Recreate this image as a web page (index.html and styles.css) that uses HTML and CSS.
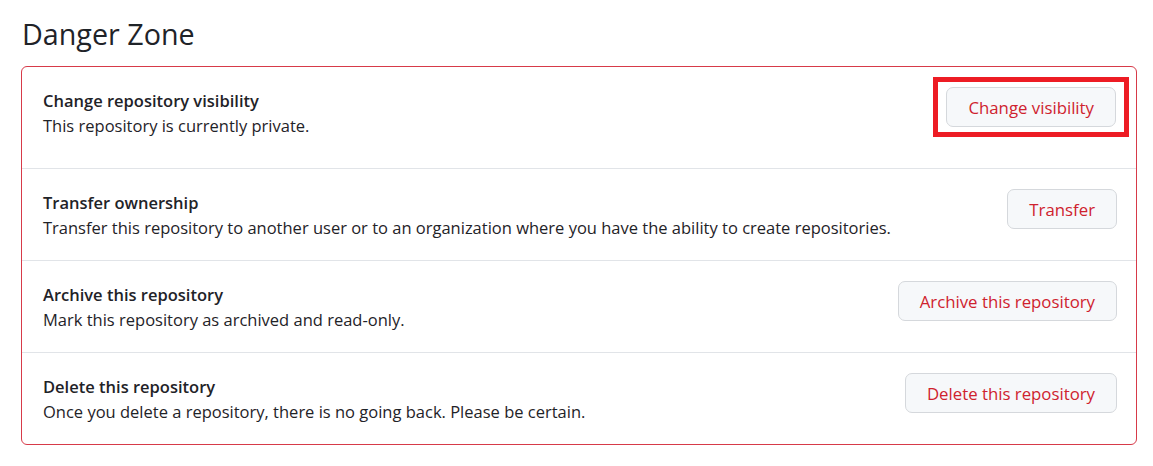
FILE: index.html
```html
<!DOCTYPE html>
<html lang="en">
<head>
<meta charset="utf-8">
<title>Danger Zone</title>
<link rel="stylesheet" href="styles.css">
</head>
<body>
<div class="page">
  <h2 class="zone-title">Danger Zone</h2>
  <div class="danger-box">
    <div class="row row-first">
      <div class="info">
        <div class="row-title">Change repository visibility</div>
        <div class="row-desc">This repository is currently private.</div>
      </div>
      <div class="highlight"><button class="btn-danger">Change visibility</button></div>
    </div>
    <div class="row">
      <div class="info">
        <div class="row-title">Transfer ownership</div>
        <div class="row-desc">Transfer this repository to another user or to an organization where you have the ability to create repositories.</div>
      </div>
      <button class="btn-danger">Transfer</button>
    </div>
    <div class="row">
      <div class="info">
        <div class="row-title">Archive this repository</div>
        <div class="row-desc">Mark this repository as archived and read-only.</div>
      </div>
      <button class="btn-danger">Archive this repository</button>
    </div>
    <div class="row">
      <div class="info">
        <div class="row-title">Delete this repository</div>
        <div class="row-desc">Once you delete a repository, there is no going back. Please be certain.</div>
      </div>
      <button class="btn-danger">Delete this repository</button>
    </div>
  </div>
</div>
</body>
</html>
```
FILE: styles.css
```css
* { box-sizing: border-box; }
html, body { margin: 0; padding: 0; background: #ffffff; }
body {
  font-family: "Open Sans", "Noto Sans", "Liberation Sans", sans-serif;
  color: #1f2328;
}
.page {
  padding: 16px 16px 0 21px;
}
.zone-title {
  margin: 0 0 14px 1px;
  font-size: 28.7px;
  line-height: 36px;
  font-weight: 400;
  color: #1f2328;
}
.danger-box {
  border: 1px solid #d73a49;
  border-radius: 6px;
  width: 1116px;
}
.row {
  display: flex;
  justify-content: space-between;
  align-items: flex-start;
  padding: 21px 20px 20px 21px;
  border-top: 1px solid #e1e4e8;
}
.row-first { border-top: 0; }
.info { min-width: 0; }
.row-title {
  font-size: 16.5px;
  line-height: 25px;
  font-weight: 600;
}
.row-desc {
  font-size: 16.5px;
  line-height: 25px;
}
.btn-danger {
  font-family: inherit;
  font-size: 16.8px;
  font-weight: 500;
  color: #cf222e;
  background: #f6f8fa;
  border: 1px solid #d5d8dc;
  border-radius: 7px;
  height: 40px;
  padding: 0 21px;
  margin-top: -1px;
  margin-right: -1px;
  cursor: pointer;
  white-space: nowrap;
}
.highlight {
  border: 5px solid #ed1c24;
  padding: 5px 8px;
  margin: -11px -13px 11px 0;
}
.highlight .btn-danger { margin: 0; display: block; }
```
